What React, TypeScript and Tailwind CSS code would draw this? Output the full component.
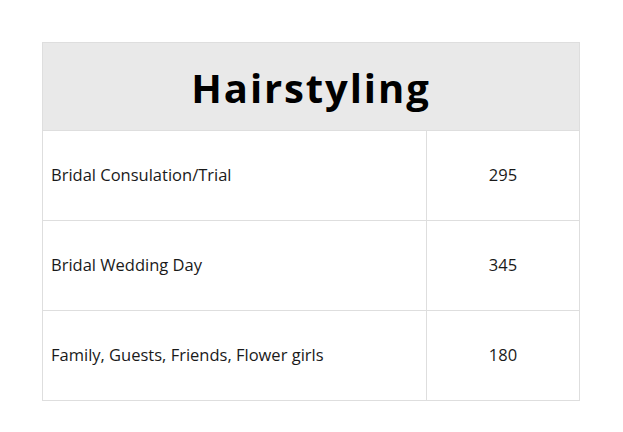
export default function App() {
  const rows = [
    { name: "Bridal Consulation/Trial", price: "295" },
    { name: "Bridal Wedding Day", price: "345" },
    { name: "Family, Guests, Friends, Flower girls", price: "180" },
  ];
  return (
    <div className="w-[623px] h-[432px] bg-white pt-[42px] pl-[42px]" style={{ fontFamily: '"Open Sans", sans-serif' }}>
      <div className="w-[538px] border border-[#dedede]">
        <div className="h-[88px] bg-[#e9e9e9] border-b border-[#dedede] flex items-center justify-center">
          <h1 className="text-[40px] font-bold text-black tracking-[1.9px] leading-none pt-[2px]">Hairstyling</h1>
        </div>
        {rows.map((r, i) => (
          <div
            key={r.name}
            className={`flex ${i < rows.length - 1 ? "h-[90px] border-b border-[#dedede]" : "h-[89px]"}`}
          >
            <div className="w-[384px] border-r border-[#dedede] flex items-center pl-[8px] text-[16.5px] text-[#1a1a1a]">
              {r.name}
            </div>
            <div className="flex-1 flex items-center justify-center text-[16.5px] text-[#1a1a1a]">{r.price}</div>
          </div>
        ))}
      </div>
    </div>
  );
}
